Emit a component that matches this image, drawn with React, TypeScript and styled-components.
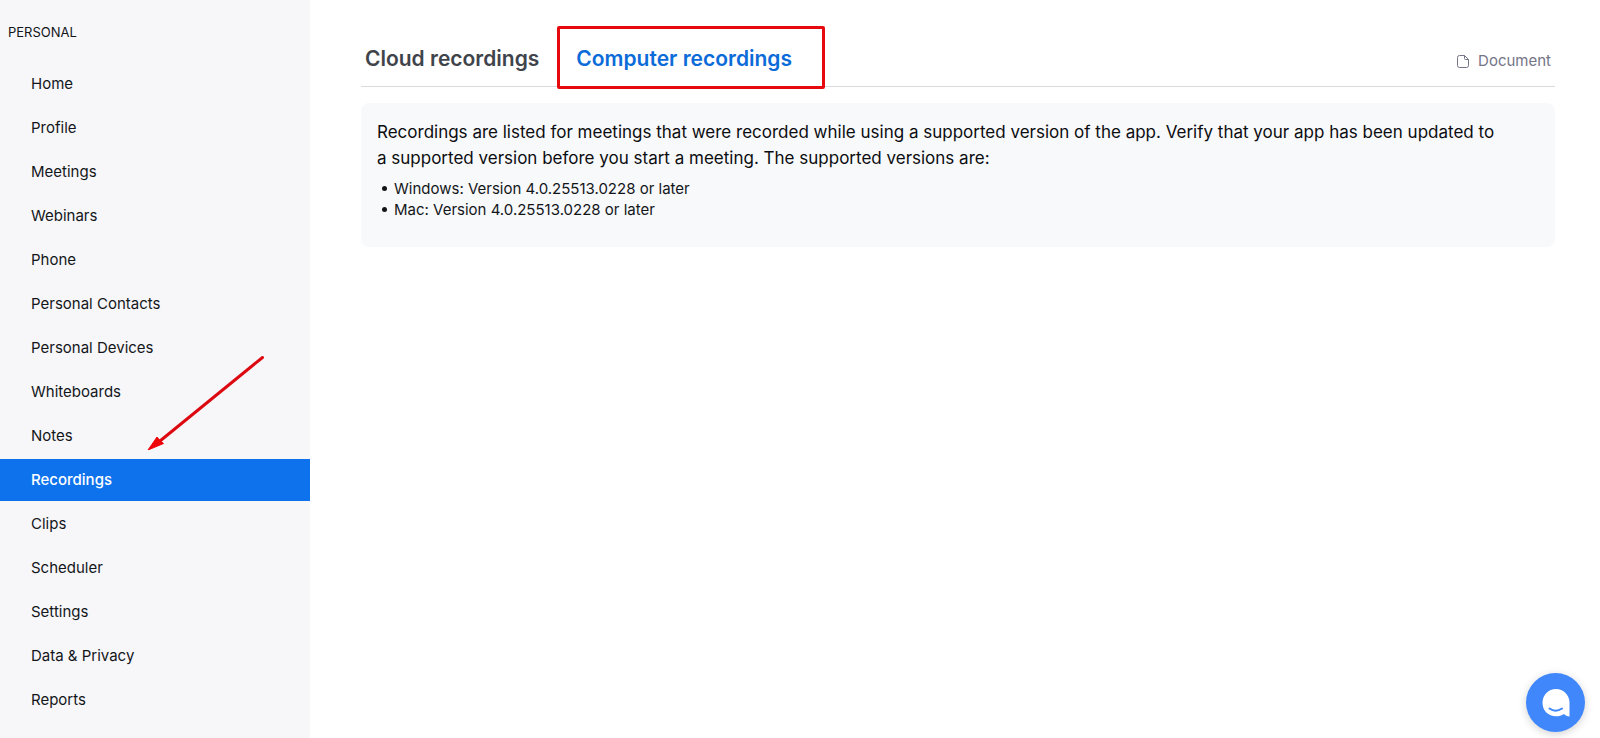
import React from "react";
import styled, { createGlobalStyle } from "styled-components";

const GlobalStyle = createGlobalStyle`
  *, *::before, *::after { box-sizing: border-box; }
  body {
    margin: 0;
    background: #fff;
    color: #131619;
    font-family: Inter, "Liberation Sans", sans-serif;
  }
`;

const Page = styled.div`
  display: flex;
  align-items: stretch;
  min-height: 100vh;
`;

const Sidebar = styled.nav`
  flex: 0 0 310px;
  padding: 24px 0 16px;
  background: #f7f7fa;
`;

const SectionTitle = styled.h2`
  margin: 0 0 22px;
  padding-left: 8px;
  font-size: 13px;
  line-height: 17px;
  font-weight: 400;
`;

const NavList = styled.ul`
  display: flex;
  flex-direction: column;
  gap: 2px;
  margin: 0;
  padding: 0;
  list-style: none;
`;

const NavItem = styled.li`
  position: relative;
`;

const NavLink = styled.a<{ $active: boolean }>`
  display: block;
  padding: 0 31px;
  font-size: 15px;
  line-height: 42px;
  font-weight: ${({ $active }) => ($active ? 500 : 400)};
  text-decoration: none;
  color: ${({ $active }) => ($active ? "#fff" : "#131619")};
  background: ${({ $active }) => ($active ? "#0e72ed" : "transparent")};
`;

const PointerArrow = styled.svg`
  position: absolute;
  left: 144px;
  bottom: 51px;
  width: 124px;
  height: 100px;
  pointer-events: none;
`;

const Main = styled.main`
  flex: 1;
  min-width: 0;
  padding: 32px 45px 32px 51px;
`;

const Header = styled.header`
  display: flex;
  justify-content: space-between;
  align-items: center;
  height: 55px;
  padding: 0 4px;
  border-bottom: 1px solid #d9dadd;
`;

const Tabs = styled.div`
  display: flex;
  gap: 37px;
`;

const Tab = styled.button<{ $active: boolean }>`
  position: relative;
  padding: 0;
  border: 0;
  background: none;
  font-family: inherit;
  font-size: 21px;
  line-height: 52px;
  font-weight: 600;
  color: ${({ $active }) => ($active ? "#0b6bd8" : "#3f444b")};
  cursor: pointer;
`;

const Highlight = styled.span`
  position: absolute;
  inset: -7px -33px -4px -19px;
  border: 3px solid #e60a0f;
  border-radius: 2px;
  pointer-events: none;
`;

const DocumentLink = styled.a`
  display: flex;
  align-items: center;
  gap: 9px;
  padding-top: 4px;
  font-size: 15px;
  line-height: 20px;
  color: #747487;
  text-decoration: none;
`;

const Notice = styled.section`
  margin-top: 16px;
  padding: 16px 48px 27px 16px;
  border-radius: 8px;
  background: #f8f9fb;
`;

const NoticeText = styled.p`
  margin: 0 0 7px;
  font-size: 17px;
  line-height: 26px;
  color: #0c0d10;
`;

const VersionList = styled.ul`
  margin: 0;
  padding-left: 17px;
  font-size: 15px;
  line-height: 21px;
`;

const Version = styled.li`
  display: flex;
  align-items: center;

  &::before {
    content: "";
    width: 5px;
    height: 5px;
    margin: 0 7px 0 -12px;
    border-radius: 50%;
    background: #131619;
  }
`;

const ChatButton = styled.button`
  position: fixed;
  right: 15px;
  bottom: 6px;
  display: flex;
  align-items: center;
  justify-content: center;
  width: 59px;
  height: 59px;
  padding: 0;
  border: 0;
  border-radius: 50%;
  background: #4087fc;
  box-shadow: 0 2px 8px rgba(0, 0, 0, 0.18);
  cursor: pointer;
`;

const navItems = [
  "Home",
  "Profile",
  "Meetings",
  "Webinars",
  "Phone",
  "Personal Contacts",
  "Personal Devices",
  "Whiteboards",
  "Notes",
  "Recordings",
  "Clips",
  "Scheduler",
  "Settings",
  "Data & Privacy",
  "Reports",
];

const activeItem = "Recordings";

const versions = [
  "Windows: Version 4.0.25513.0228 or later",
  "Mac: Version 4.0.25513.0228 or later",
];

const Arrow = () => (
  <PointerArrow viewBox="0 0 124 100" aria-hidden="true">
    <path d="M118.500 7.500 16 91" stroke="#dc0a10" strokeWidth="3" strokeLinecap="round" />
    <path d="M4 100 13 87 15.500 90 19.500 93.500Z" fill="#ee0508" stroke="#ee0508" strokeLinejoin="round" />
  </PointerArrow>
);

const DocumentIcon = () => (
  <svg width="12" height="13" viewBox="0 0 12 13" fill="none" stroke="#747487" aria-hidden="true">
    <path d="M2.500.5H7.500L11.500 4.500V10.500a2 2 0 0 1-2 2h-7a2 2 0 0 1-2-2v-8a2 2 0 0 1 2-2Z" />
    <path d="M7.500.5V3.500a1 1 0 0 0 1 1h3" />
  </svg>
);

const ChatIcon = () => (
  <svg width="28" height="28" viewBox="0 0 28 28" aria-hidden="true">
    <path
      d="M14 0C21.500 0 27.500 6 27.500 13.500V27.500C25 27.500 23.500 26.500 22 25C19.500 26.700 17 27.300 14 27.300C6.300 27.300 .5 21.500 .5 13.700C.5 6 6.500 0 14 0Z"
      fill="#fff"
    />
    <path d="M7.500 19.500Q13.500 24 20 19.500" fill="none" stroke="#4087fc" strokeWidth="2" strokeLinecap="round" />
  </svg>
);

export default function App() {
  return (
    <>
      <GlobalStyle />
      <Page>
        <Sidebar aria-label="Personal">
          <SectionTitle>PERSONAL</SectionTitle>
          <NavList>
            {navItems.map((name) => (
              <NavItem key={name}>
                <NavLink
                  href="#"
                  $active={name === activeItem}
                  aria-current={name === activeItem ? "page" : undefined}
                >
                  {name}
                </NavLink>
                {name === activeItem && <Arrow />}
              </NavItem>
            ))}
          </NavList>
        </Sidebar>
        <Main>
          <Header>
            <Tabs role="tablist">
              <Tab type="button" role="tab" aria-selected={false} $active={false}>
                Cloud recordings
              </Tab>
              <Tab type="button" role="tab" aria-selected={true} $active={true}>
                Computer recordings
                <Highlight />
              </Tab>
            </Tabs>
            <DocumentLink href="#">
              <DocumentIcon />
              Document
            </DocumentLink>
          </Header>
          <Notice>
            <NoticeText>
              Recordings are listed for meetings that were recorded while using a supported version of
              the app. Verify that your app has been updated to a supported version before you start a
              meeting. The supported versions are:
            </NoticeText>
            <VersionList>
              {versions.map((version) => (
                <Version key={version}>{version}</Version>
              ))}
            </VersionList>
          </Notice>
        </Main>
      </Page>
      <ChatButton type="button" aria-label="Open chat">
        <ChatIcon />
      </ChatButton>
    </>
  );
}
